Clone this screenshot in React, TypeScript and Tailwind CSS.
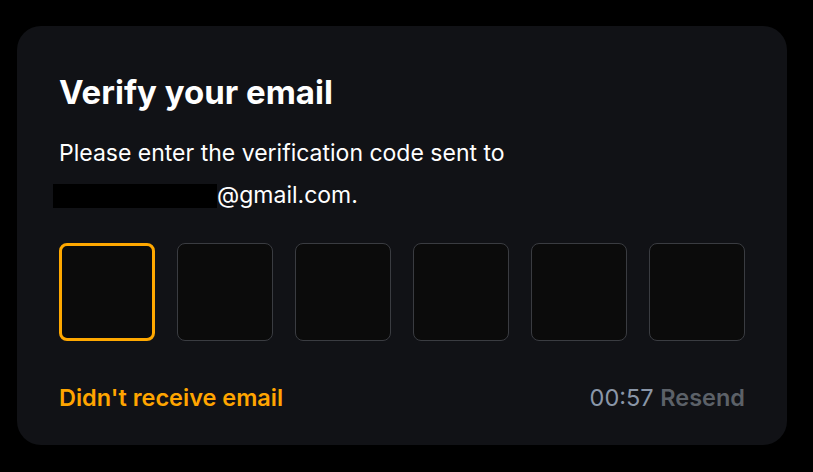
export default function App() {
  const cells = [0, 1, 2, 3, 4, 5];
  return (
    <div className="w-[813px] h-[472px] bg-black pt-[26px] pl-[17px]" style={{ fontFamily: "Inter, 'Noto Sans', sans-serif" }}>
      <div className="w-[770px] h-[419px] bg-[#111216] rounded-[24px] px-[42px] pt-[42px]">
        <h1 className="text-[33px] leading-[48px] font-bold text-white">Verify your email</h1>
        <p className="mt-[16px] text-[23px] leading-[42px] text-white">
          Please enter the verification code sent to
          <br />
          <span className="inline-block w-[164px] h-[24px] bg-black align-[-5px] -ml-[6px]"></span>
          @gmail.com.
        </p>
        <div className="mt-[27px] flex gap-[22px]">
          {cells.map((i) => (
            <div
              key={i}
              className={
                i === 0
                  ? "w-[96px] h-[98px] rounded-[8px] bg-[#0b0b0b] border-[3px] border-[#ffa800]"
                  : "w-[96px] h-[98px] rounded-[8px] bg-[#0b0b0b] border border-[#3a3c41]"
              }
            ></div>
          ))}
        </div>
        <div className="mt-[42px] flex justify-between items-center text-[23.5px] leading-[30px]">
          <span className="font-semibold text-[#ffa500]">Didn't receive email</span>
          <span>
            <span className="text-[#8a96a8]">00:57</span>{" "}
            <span className="font-semibold text-[#5c6168]">Resend</span>
          </span>
        </div>
      </div>
    </div>
  );
}
